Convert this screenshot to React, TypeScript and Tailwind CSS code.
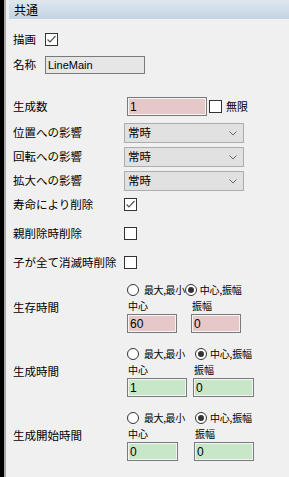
import React from "react";

const jp = { fontFamily: '"Noto Sans CJK JP", "Noto Sans", sans-serif' };
const lat = { fontFamily: '"Liberation Sans", Arial, sans-serif' };

function Check({ checked }: { checked?: boolean }) {
    return <span className="w-[13px] h-[13px] border border-[#333] bg-white flex items-center justify-center shrink-0">
        {checked && <svg width="11" height="11" viewBox="0 0 11 11">
            <path d="M1.5 5.5 L4 8 L9.5 2" fill="none" stroke="#555" strokeWidth="1.2" />
        </svg>}
    </span>
}

function Radio({ checked }: { checked?: boolean }) {
    return <span className="w-[12px] h-[12px] rounded-full border border-[#333] bg-white flex items-center justify-center shrink-0">
        {checked && <span className="w-[6px] h-[6px] rounded-full bg-[#333]" />}
    </span>
}

function Select() {
    return <div className="w-[120px] h-[20px] bg-[#e1e1e1] border border-[#adadad] flex items-center justify-between pl-[3px] pr-[6px] text-[11.5px] text-black" style={jp}>
        常時
        <svg width="8" height="5" viewBox="0 0 8 5">
            <path d="M0.5 0.5 L4 4 L7.5 0.5" fill="none" stroke="#666" strokeWidth="1" />
        </svg>
    </div>
}

function Field({ value, w, bg }: { value: string, w: number, bg: string }) {
    return <div className="h-[19px] border border-[#7a7a7a] flex items-center pl-[2px] text-[12px] text-black shadow-[inset_0_0_0_1px_#f4f4f4]" style={{ ...lat, width: w, background: bg }}>
        {value}
    </div>
}

type GroupProps = {
    label: string
    value: string
    bg: string
    w1: number
    w2: number
    x2: number
    r2?: number
}

function RangeGroup({ label, value, bg, w1, w2, x2, r2 }: GroupProps) {
    return <div className="flex items-center mt-[14px]">
        <div className="w-[114px] text-[11.5px]" style={jp}>{label}</div>
        <div className="flex flex-col">
            <div className="h-[13px] flex items-center text-[10px] whitespace-nowrap" style={jp}>
                <div className="flex items-center gap-[5px] shrink-0" style={r2 ? { width: r2 } : undefined}>
                    <Radio />
                    <span className="tracking-[-0.4px]">最大,最小</span>
                </div>
                <div className="flex items-center gap-[3px]">
                    <Radio checked />
                    <span className="tracking-[-0.2px]">中心,振幅</span>
                </div>
            </div>
            <div className="h-[14px] mt-[2px] flex items-center text-[10px]" style={jp}>
                <div className="pl-[1px]" style={{ width: x2 }}>中心</div>
                <div className="pl-[1px]">振幅</div>
            </div>
            <div className="flex mt-[2px]">
                <div style={{ width: x2 }}><Field value={value} w={w1} bg={bg} /></div>
                <Field value="0" w={w2} bg={bg} />
            </div>
        </div>
    </div>
}

export default function App() {
    return <div className="w-[289px] h-[477px] bg-[#f0f0f0] flex text-black overflow-hidden">
        <div className="w-[4px] bg-black" />
        <div className="w-[2px] bg-[#a8a8a8]" />
        <div className="flex-1 pl-[3px] flex flex-col">
            <div className="h-[1px] bg-[#e4e4e4]" />
            <div className="h-[18px] bg-gradient-to-b from-[#dde7f1] to-[#c3d3e3] flex items-center pl-[5px] text-[12px]" style={jp}>
                共通
            </div>
            <div className="pl-[4px] flex flex-col">
                <div className="flex items-center mt-[14px] h-[13px]">
                    <div className="w-[32px] text-[11.5px]" style={jp}>描画</div>
                    <Check checked />
                </div>
                <div className="flex items-center mt-[10px]">
                    <div className="w-[32px] text-[11.5px]" style={jp}>名称</div>
                    <div className="w-[100px] h-[18px] bg-[#e6e6e6] border border-[#7a7a7a] flex items-center pl-[2px] text-[11px]" style={lat}>LineMain</div>
                </div>
                <div className="flex items-center mt-[23px]">
                    <div className="w-[114px] text-[11.5px]" style={jp}>生成数</div>
                    <Field value="1" w={80} bg="#e6c8c8" />
                    <div className="ml-[2px]"><Check /></div>
                    <div className="ml-[4px] text-[11px]" style={jp}>無限</div>
                </div>
                <div className="flex items-center mt-[7px]">
                    <div className="w-[111px] text-[11.5px]" style={jp}>位置への影響</div>
                    <Select />
                </div>
                <div className="flex items-center mt-[4px]">
                    <div className="w-[111px] text-[11.5px]" style={jp}>回転への影響</div>
                    <Select />
                </div>
                <div className="flex items-center mt-[4px]">
                    <div className="w-[111px] text-[11.5px]" style={jp}>拡大への影響</div>
                    <Select />
                </div>
                <div className="flex items-center mt-[7px] h-[13px]">
                    <div className="w-[111px] text-[11.5px]" style={jp}>寿命により削除</div>
                    <Check checked />
                </div>
                <div className="flex items-center mt-[16px] h-[13px]">
                    <div className="w-[111px] text-[11.5px]" style={jp}>親削除時削除</div>
                    <Check />
                </div>
                <div className="flex items-center mt-[16px] h-[13px]">
                    <div className="w-[111px] text-[11.5px] whitespace-nowrap" style={jp}>子が全て消滅時削除</div>
                    <Check />
                </div>
                <RangeGroup label="生存時間" value="60" bg="#e6c8c8" w1={50} w2={50} x2={64} />
                <RangeGroup label="生成時間" value="1" bg="#c8e6c8" w1={60} w2={61} x2={66} r2={68} />
                <RangeGroup label="生成開始時間" value="0" bg="#c8e6c8" w1={51} w2={60} x2={67} r2={68} />
            </div>
        </div>
    </div>
}
